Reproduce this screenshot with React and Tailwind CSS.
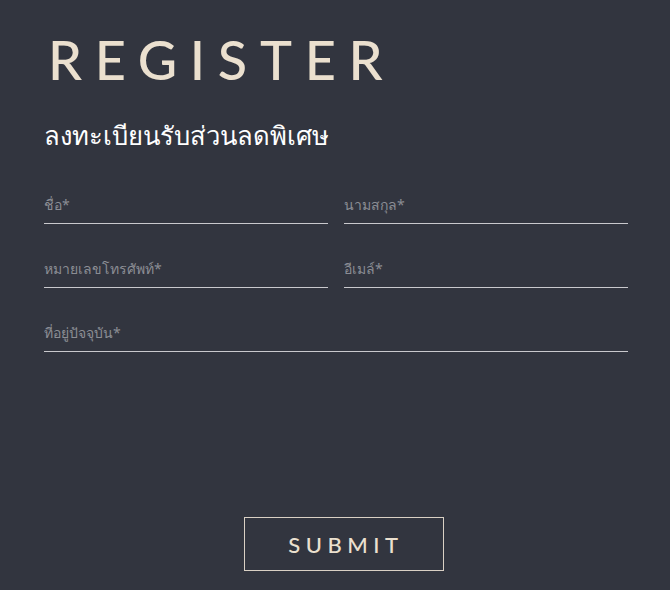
export default function App() {
  return (
    <div className="min-h-[590px] w-full bg-[#32353f] pl-[44px] pr-[42px] pt-[30px]" style={{ fontFamily: '"Noto Sans", sans-serif' }}>
      <h1 className="pl-[4px] text-[54px] leading-[60px] font-medium tracking-[0.235em] text-[#ebe0cf]" style={{ fontFamily: 'Lato, sans-serif' }}>
        REGISTER
      </h1>
      <h2 className="mt-[30px] text-[25.6px] leading-[32px] text-white">ลงทะเบียนรับส่วนลดพิเศษ</h2>
      <form className="mt-[32px]">
        <div className="grid grid-cols-2 gap-x-[16px] gap-y-[24px]">
          <Field label="ชื่อ*" />
          <Field label="นามสกุล*" />
          <Field label="หมายเลขโทรศัพท์*" />
          <Field label="อีเมล์*" />
          <div className="col-span-2">
            <Field label="ที่อยู่ปัจจุบัน*" />
          </div>
        </div>
        <div className="mt-[165px] flex">
          <button type="button" className="ml-[200px] h-[54px] w-[200px] border border-[#d9d0c4] pl-[4px] text-[22px] font-medium tracking-[0.25em] text-[#ebe0cf]" style={{ fontFamily: 'Lato, sans-serif' }}>
            SUBMIT
          </button>
        </div>
      </form>
    </div>
  );
}

function Field({ label }) {
  return (
    <input
      placeholder={label}
      className="block h-[40px] w-full border-b border-[#c9c9cd] bg-transparent pt-[2px] text-[14px] text-white placeholder:text-[#8b8d94] outline-none"
    />
  );
}
